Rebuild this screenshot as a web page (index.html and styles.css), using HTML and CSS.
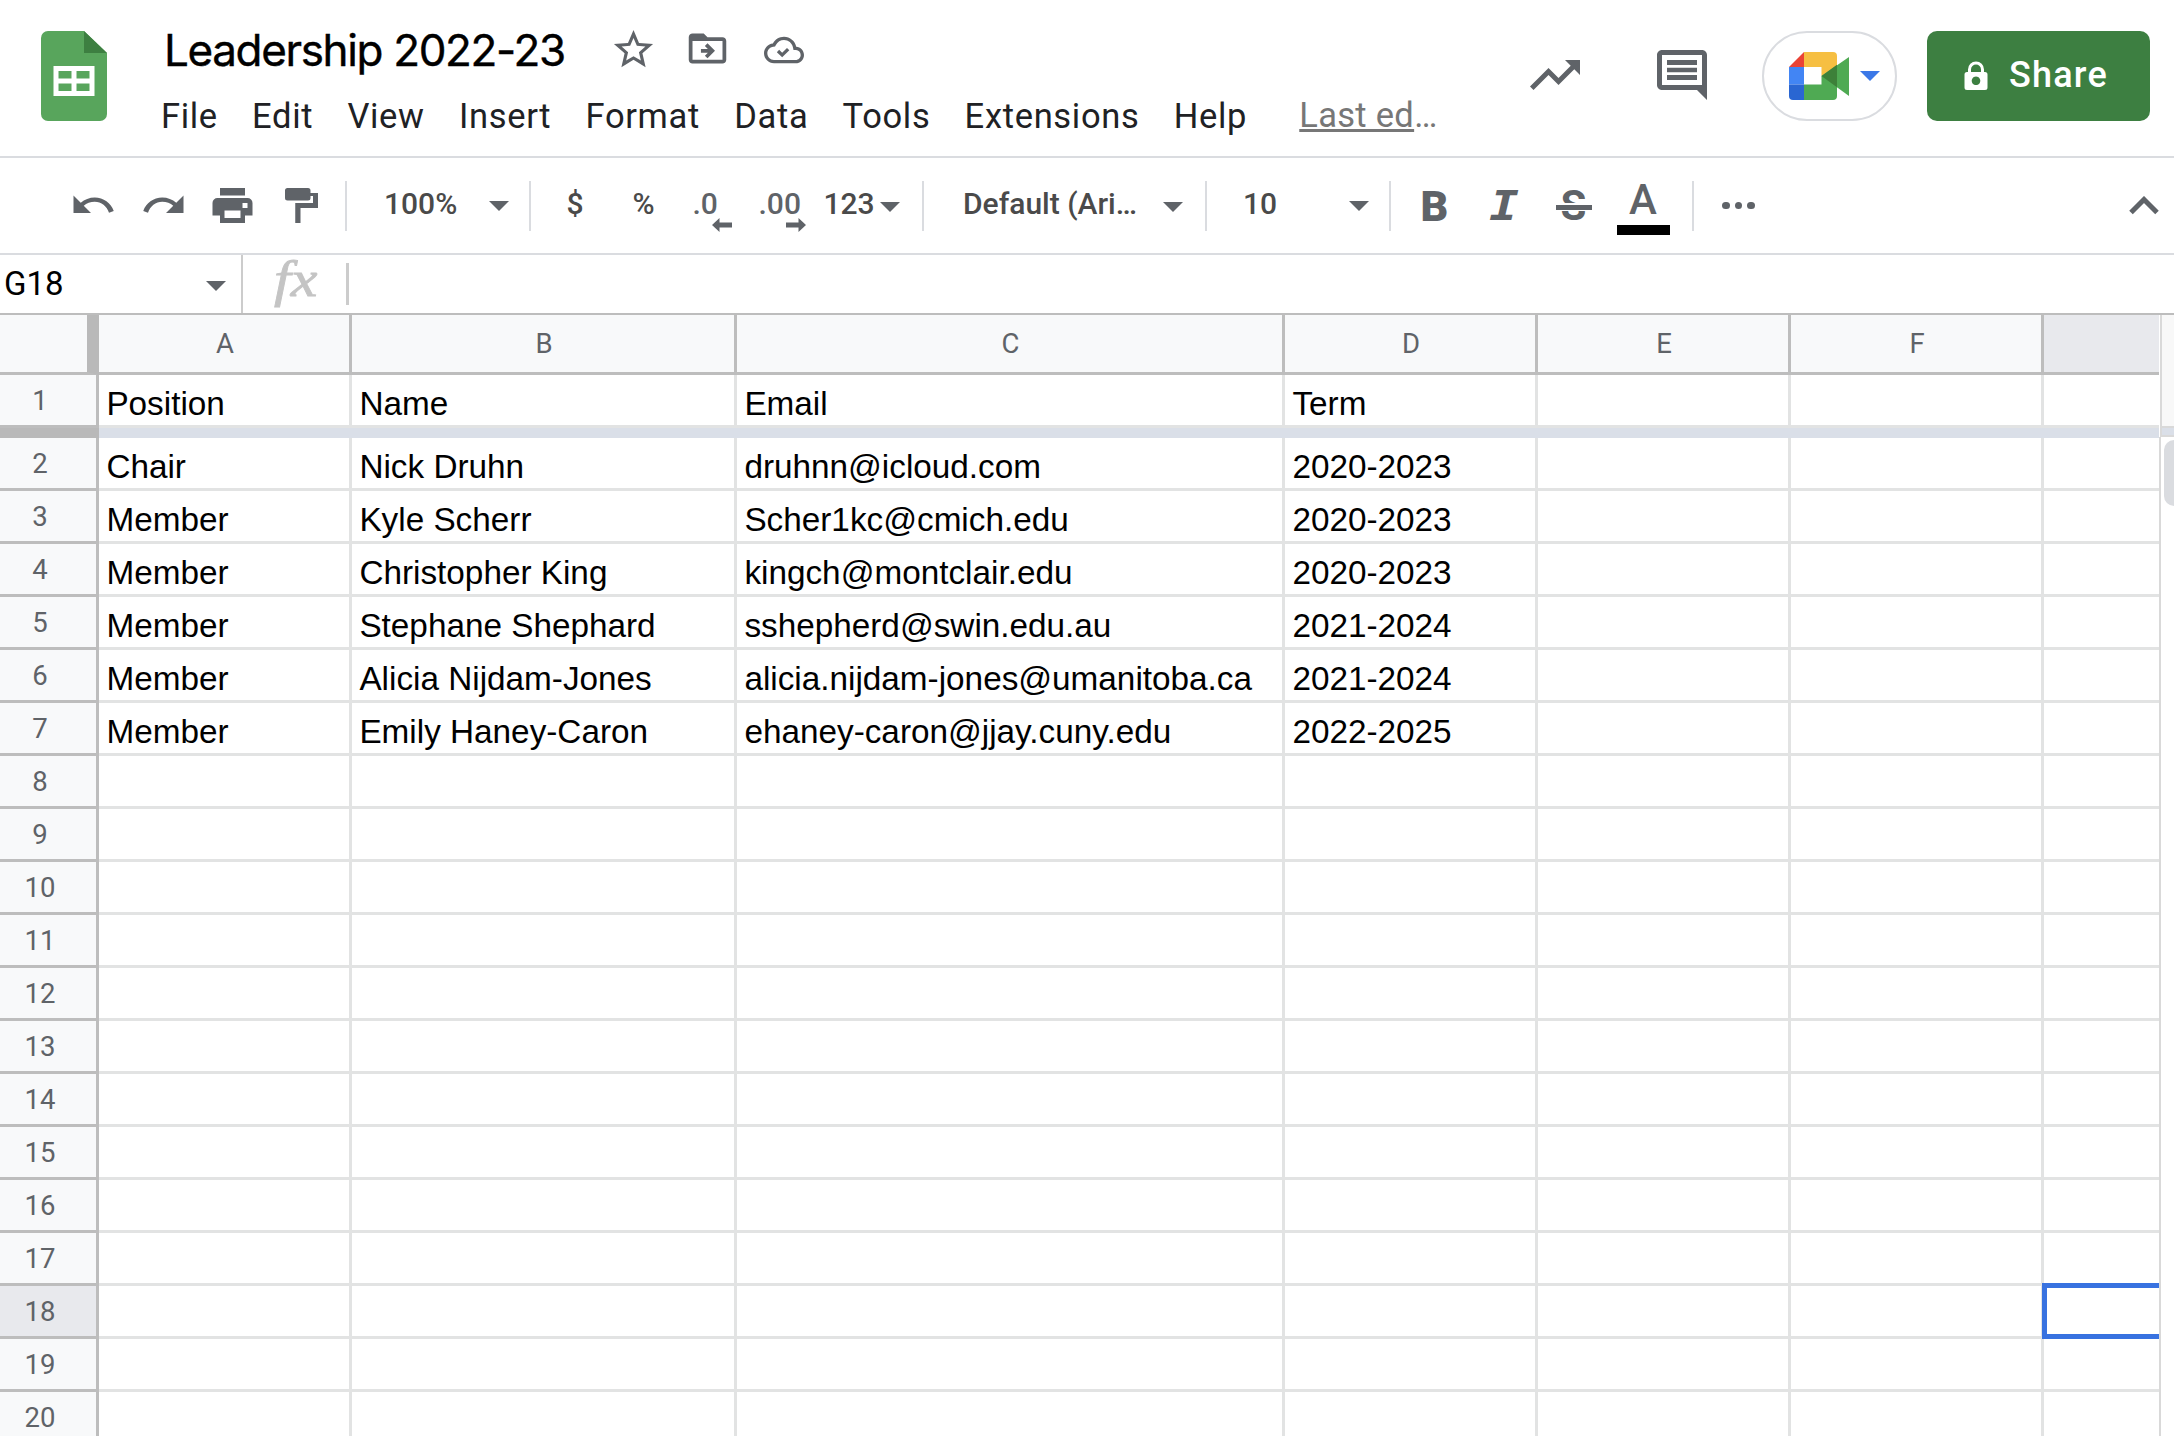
FILE: index.html
```html
<!DOCTYPE html>
<html lang="en">
<head>
<meta charset="utf-8">
<title>Leadership 2022-23</title>
<link rel="stylesheet" href="styles.css">
</head>
<body>
<header class="header">
  <svg class="logo" viewBox="0 0 66 90"><path fill="#58a55c" d="M7 0h36l23 22v61a7 7 0 0 1-7 7H7a7 7 0 0 1-7-7V7a7 7 0 0 1 7-7z"/><path fill="#3d7f41" d="M43 0l23 22H43z"/><path fill="#fff" fill-rule="evenodd" d="M12.500 35h41v30h-41zM17.500 40v7.500h13V40zM35.500 40v7.500h13V40zM17.500 52.500V60h13v-7.500zM35.500 52.500V60h13v-7.500z"/></svg>
  <div class="heading">
    <div class="title-row">
      <h1 class="title">Leadership 2022-23</h1>
      <svg class="icon star" viewBox="0 0 24 24"><path d="M22 9.240l-7.190-.62L12 2 9.190 8.630 2 9.240l5.460 4.730L5.820 21 12 17.270 18.180 21l-1.630-7.030L22 9.240zM12 15.400l-3.760 2.270 1-4.280-3.320-2.880 4.380-.38L12 6.100l1.710 4.040 4.380.38-3.320 2.880 1 4.280L12 15.400z"/></svg>
      <svg class="icon folder" viewBox="0 0 24 24"><path d="M20 6h-8l-2-2H4c-1.100 0-2 .9-2 2v12c0 1.100.9 2 2 2h16c1.100 0 2-.9 2-2V8c0-1.100-.9-2-2-2zm0 12H4V8h16v10zM8.500 12.200h3.700l-1.600-1.600L12 9.200l4 4-4 4-1.400-1.400 1.600-1.600H8.500z"/></svg>
      <svg class="icon cloud" viewBox="0 0 24 24"><path d="M19.350 10.040C18.670 6.590 15.640 4 12 4 9.110 4 6.600 5.640 5.350 8.040 2.340 8.360 0 10.910 0 14c0 3.310 2.690 6 6 6h13c2.760 0 5-2.240 5-5 0-2.640-2.050-4.780-4.650-4.960zM19 18H6c-2.210 0-4-1.790-4-4 0-2.050 1.530-3.760 3.560-3.970l1.070-.11.5-.95C8.080 7.140 9.940 6 12 6c2.620 0 4.880 1.860 5.390 4.430l.3 1.500 1.530.11c1.560.1 2.780 1.410 2.780 2.960 0 1.650-1.350 3-3 3zM10.900 16.400l-3.200-3.100 1.400-1.400 1.800 1.800 2.900-2.900 1.400 1.400z"/></svg>
    </div>
    <nav class="menu">
      <span>File</span><span>Edit</span><span>View</span><span>Insert</span><span>Format</span><span>Data</span><span>Tools</span><span>Extensions</span><span>Help</span>
      <span class="last-edit"><u>Last ed</u>…</span>
    </nav>
  </div>
  <div class="actions">
    <svg class="icon trend" viewBox="0 0 24 24"><path d="M16 6l2.290 2.290-4.880 4.880-4-4L2 16.590 3.410 18l6-6 4 4 6.300-6.290L22 12V6z"/></svg>
    <svg class="icon comment" viewBox="0 0 24 24"><path fill-rule="evenodd" d="M20 2H4c-1.100 0-2 .9-2 2v12c0 1.100.9 2 2 2h14l4 4V4c0-1.100-.9-2-2-2zM20 16H4V4h16zM6 6h12v2H6zM6 9.100h12v1.800H6zM6 12h12v2H6z"/></svg>
    <div class="meet">
      <svg class="meet-logo" viewBox="0 0 60 48"><path fill="#ea4335" d="M0 15L15 0v15z"/><path fill="#f6bf42" d="M15 0h29a4 4 0 0 1 4 4v10L32.500 24V15H15z"/><path fill="#4285f4" d="M0 15h15v17.500H0z"/><path fill="#2a66d2" d="M0 32.500h15V48H4a4 4 0 0 1-4-4z"/><path fill="#4faa53" d="M15 32.500h17.500V24L48 34v10a4 4 0 0 1-4 4H15zM60 5v39L32.500 24z"/><path fill="#3d8139" d="M48 12.700v22.600L32.500 24z"/></svg>
      <svg class="caret blue" viewBox="0 0 20 10"><path d="M0 0h20L10 10z"/></svg>
    </div>
    <div class="share">
      <svg class="lock" viewBox="0 0 24 30"><path fill="#fff" fill-rule="evenodd" d="M3 11h1V8.500a8 8 0 0 1 16 0V11h1a2.500 2.500 0 0 1 2.500 2.500v13A2.500 2.500 0 0 1 21 29H3a2.500 2.500 0 0 1-2.500-2.500v-13A2.500 2.500 0 0 1 3 11zm4 0h10V8.500a5 5 0 0 0-10 0zm5 4.500a4.300 4.300 0 1 0 .01 0z"/></svg>
      <span>Share</span>
    </div>
  </div>
</header>

<div class="toolbar">
  <div class="tools">
    <svg class="icon tool" viewBox="0 0 18 18"><path d="M1 5v7h7L5.100 9.100C6.200 8.100 7.800 7.500 9.500 7.500c2.600 0 4.900 1.800 5.700 4.400l1.900-.7c-1.100-3.200-4.100-5.400-7.600-5.400-2.100 0-4.100.8-5.600 2.100L1 5z"/></svg>
    <svg class="icon tool" viewBox="0 0 18 18"><path d="M17 5v7h-7l2.900-2.900C11.800 8.100 10.200 7.500 8.500 7.500c-2.600 0-4.900 1.800-5.700 4.400l-1.900-.7C2 8 5 5.800 8.500 5.800c2.100 0 4.100.8 5.600 2.100L17 5z"/></svg>
    <svg class="icon tool" viewBox="0 0 18 18"><path fill-rule="evenodd" d="M4 2h10v3H4zM3 6h12a2 2 0 0 1 2 2v5h-3v3H4v-3H1V8a2 2 0 0 1 2-2zM5.800 11v3h6.400v-3zM13 8v2h2V8z"/></svg>
    <svg class="icon tool" viewBox="0 0 18 18"><path d="M3 2h8.200a1 1 0 0 1 1 1v1h3v6H8.200v6H6.100V8h7.100V5.200h-1V6a1 1 0 0 1-1 1H3a1 1 0 0 1-1-1V3a1 1 0 0 1 1-1z"/></svg>
  </div>
  <div class="group zoom"><span>100%</span><svg class="caret" viewBox="0 0 20 10"><path d="M0 0h20L10 10z"/></svg></div>
  <div class="group formats">
    <span class="cur">$</span><span class="pct">%</span>
    <span class="dec d1">.0<svg viewBox="0 0 20 14"><path d="M0 7l7.500-7v4.500H20v5H7.500V14z"/></svg></span>
    <span class="dec d2">.00<svg viewBox="0 0 20 14"><path d="M20 7l-7.500-7v4.500H0v5h12.500V14z"/></svg></span>
    <span class="num123">123</span><svg class="caret low" viewBox="0 0 20 10"><path d="M0 0h20L10 10z"/></svg>
  </div>
  <div class="group font"><span>Default (Ari…</span><svg class="caret low" viewBox="0 0 20 10"><path d="M0 0h20L10 10z"/></svg></div>
  <div class="group size"><span>10</span><svg class="caret" viewBox="0 0 20 10"><path d="M0 0h20L10 10z"/></svg></div>
  <div class="group styles">
    <span class="glyph bold">B</span><span class="glyph italic">I</span><span class="glyph strike">S</span><span class="glyph color">A</span>
  </div>
  <div class="group more"><i></i><i></i><i></i></div>
  <svg class="chevron" viewBox="0 0 30 19"><path fill="none" stroke="#5f6368" stroke-width="5" d="M2 16.500L15 3.500l13 13"/></svg>
</div>

<div class="formula">
  <div class="namebox"><span>G18</span><svg class="caret" viewBox="0 0 20 10"><path d="M0 0h20L10 10z"/></svg></div>
  <div class="fx"><span>fx</span></div>
</div>

<main class="sheet">
  <table class="grid">
    <colgroup><col class="c-num"><col class="c-a"><col class="c-b"><col class="c-c"><col class="c-d"><col class="c-d"><col class="c-d"><col class="c-g"></colgroup>
    <thead><tr><th class="corner"></th><th>A</th><th>B</th><th>C</th><th>D</th><th>E</th><th>F</th><th class="active"></th></tr></thead>
    <tbody>
      <tr><th>1</th><td>Position</td><td>Name</td><td>Email</td><td>Term</td><td></td><td></td><td></td></tr>
      <tr class="freeze"><th></th><td colspan="7"></td></tr>
      <tr><th>2</th><td>Chair</td><td>Nick Druhn</td><td>druhnn@icloud.com</td><td>2020-2023</td><td></td><td></td><td></td></tr>
      <tr><th>3</th><td>Member</td><td>Kyle Scherr</td><td>Scher1kc@cmich.edu</td><td>2020-2023</td><td></td><td></td><td></td></tr>
      <tr><th>4</th><td>Member</td><td>Christopher King</td><td>kingch@montclair.edu</td><td>2020-2023</td><td></td><td></td><td></td></tr>
      <tr><th>5</th><td>Member</td><td>Stephane Shephard</td><td>sshepherd@swin.edu.au</td><td>2021-2024</td><td></td><td></td><td></td></tr>
      <tr><th>6</th><td>Member</td><td>Alicia Nijdam-Jones</td><td>alicia.nijdam-jones@umanitoba.ca</td><td>2021-2024</td><td></td><td></td><td></td></tr>
      <tr><th>7</th><td>Member</td><td>Emily Haney-Caron</td><td>ehaney-caron@jjay.cuny.edu</td><td>2022-2025</td><td></td><td></td><td></td></tr>
      <tr><th>8</th><td></td><td></td><td></td><td></td><td></td><td></td><td></td></tr>
      <tr><th>9</th><td></td><td></td><td></td><td></td><td></td><td></td><td></td></tr>
      <tr><th>10</th><td></td><td></td><td></td><td></td><td></td><td></td><td></td></tr>
      <tr><th>11</th><td></td><td></td><td></td><td></td><td></td><td></td><td></td></tr>
      <tr><th>12</th><td></td><td></td><td></td><td></td><td></td><td></td><td></td></tr>
      <tr><th>13</th><td></td><td></td><td></td><td></td><td></td><td></td><td></td></tr>
      <tr><th>14</th><td></td><td></td><td></td><td></td><td></td><td></td><td></td></tr>
      <tr><th>15</th><td></td><td></td><td></td><td></td><td></td><td></td><td></td></tr>
      <tr><th>16</th><td></td><td></td><td></td><td></td><td></td><td></td><td></td></tr>
      <tr><th>17</th><td></td><td></td><td></td><td></td><td></td><td></td><td></td></tr>
      <tr><th class="active">18</th><td></td><td></td><td></td><td></td><td></td><td></td><td class="selected"></td></tr>
      <tr><th>19</th><td></td><td></td><td></td><td></td><td></td><td></td><td></td></tr>
      <tr><th>20</th><td></td><td></td><td></td><td></td><td></td><td></td><td></td></tr>
    </tbody>
  </table>
  <div class="scroll">
    <div class="scroll-head"></div>
    <div class="scroll-band"></div>
    <div class="scroll-track"><div class="thumb"></div></div>
  </div>
</main>
</body>
</html>
```
FILE: styles.css
```css
*, *::before, *::after { box-sizing: border-box; }
body {
  margin: 0;
  height: 1436px;
  overflow: hidden;
  background: #fff;
  font-family: Roboto, "Liberation Sans", sans-serif;
  color: #202124;
}
svg { display: block; flex: none; }
.icon, .caret, .dec svg { fill: #5f6368; }

/* Header */
.header {
  display: flex;
  height: 158px;
  border-bottom: 2px solid #dadce0;
}
.logo { width: 66px; height: 90px; margin: 31px 0 0 41.200px; }
.heading { margin-left: 53.800px; }
.title-row { display: flex; align-items: center; height: 60px; margin-top: 20px; }
.title {
  width: 449px;
  margin: 0;
  padding-left: 3px;
  font: 400 44px/60px Inter, sans-serif;
  letter-spacing: -1.350px;
  color: #000;
  white-space: nowrap;
  -webkit-text-stroke: 0.400px #000;
}
.star { width: 47px; height: 47px; margin-top: -1px; }
.folder { width: 45px; height: 45px; margin: -4px 0 0 28px; }
.cloud { width: 40px; height: 40px; margin: -1px 0 0 34px; }
.menu {
  display: flex;
  gap: 34.200px;
  margin-top: 15px;
  font-size: 34.500px;
  line-height: 42px;
  letter-spacing: 0.680px;
  white-space: nowrap;
}
.last-edit { margin-left: 18px; margin-top: -1px; color: #777; letter-spacing: 0.300px; }
.last-edit u { text-decoration-thickness: 3px; text-underline-offset: 2px; text-decoration-skip-ink: none; }
.actions { display: flex; align-items: center; height: 90px; margin: 31px 24px 0 auto; }
.trend { width: 60px; height: 60px; margin: -2px 66px 0 0; }
.comment { width: 60px; height: 60px; margin: -2px 50px 0 1px; }
.meet {
  display: flex;
  align-items: center;
  width: 135px;
  height: 90px;
  margin-right: 30px;
  padding-left: 25px;
  border: 2px solid #dadce0;
  border-radius: 45px;
}
.meet-logo { width: 60px; height: 48px; margin-right: 11px; }
.caret { width: 20px; height: 10px; }
.caret.blue { fill: #3b78e7; }
.share {
  display: flex;
  align-items: center;
  width: 223px;
  height: 90px;
  padding-left: 37px;
  border-radius: 10px;
  background: #3d7f41;
  color: #fff;
  font: 500 36px/44px Roboto, sans-serif;
  letter-spacing: 1.200px;
}
.lock { width: 24px; height: 30px; margin-right: 21px; }
.share span { margin-top: -3px; }

/* Toolbar */
.toolbar {
  display: flex;
  align-items: center;
  height: 97px;
  border-bottom: 2px solid #dadce0;
  color: #4a4a4a;
  font-size: 30px;
  font-weight: 500;
  line-height: 36px;
}
.tools { display: flex; gap: 24.500px; width: 345px; padding-left: 71px; }
.tool { width: 45px; height: 45px; }
.group {
  display: flex;
  align-items: center;
  height: 50px;
  border-left: 2px solid #dadce0;
}
.group > span { margin-top: -3px; }
.group .caret.low { margin-top: 2px; }
.zoom { width: 184px; padding-left: 37px; }
.zoom span { width: 105px; }
.formats { width: 393px; padding-left: 35.500px; }
.cur { width: 66px; }
.pct { width: 60px; }
.dec { position: relative; color: #5f6368; }
.dec svg { position: absolute; top: 32px; width: 20px; height: 14px; }
.d1 { width: 66px; }
.d1 svg { left: 19px; }
.d2 { width: 65px; }
.d2 svg { left: 27px; }
.num123 { width: 56px; }
.font { width: 283px; padding-left: 39px; }
.font span { width: 200px; white-space: nowrap; }
.size { width: 184px; padding-left: 36px; }
.size span { width: 106px; }
.styles { width: 303px; padding-left: 13.500px; }
.glyph { color: #5f6368; }
.styles .glyph { display: flex; justify-content: center; align-items: center; width: 60px; height: 50px; margin: 0 9.500px 0 0; line-height: 50px; flex: none; }
.bold { font-size: 43px; font-weight: 900; }
.italic { font-family: "DejaVu Sans Mono", monospace; font-size: 41px; font-weight: 700; font-style: italic; transform: scaleX(1.200); }
.strike { position: relative; font-size: 42px; font-weight: 700; }
.strike::after {
  content: "";
  position: absolute;
  left: 12px;
  top: 22px;
  width: 36px;
  height: 8px;
  border: solid #fff;
  border-width: 2px 0 1px;
  background: #5f6368;
}
.styles .color { position: relative; font-size: 42px; font-weight: 500; line-height: 38px; align-items: flex-start; }
.color::after {
  content: "";
  position: absolute;
  left: 4px;
  top: 44px;
  width: 53px;
  height: 10px;
  background: #000;
}
.more { gap: 5px; padding-left: 28px; }
.more i { width: 7.500px; height: 7.500px; border-radius: 50%; background: #5f6368; }
.chevron { width: 30px; height: 19px; margin: 0 15px 0 auto; }

/* Formula bar */
.formula { display: flex; height: 60px; border-bottom: 2px solid #bdbdbd; }
.namebox {
  display: flex;
  align-items: center;
  width: 243px;
  padding-left: 4px;
  border-right: 2px solid #ccc;
  color: #000;
  font-size: 33px;
}
.namebox span { width: 202px; margin-top: -1px; }
.namebox .caret { margin-top: 4px; }
.fx {
  width: 106px;
  height: 42px;
  margin-top: 8px;
  padding-left: 31px;
  border-right: 3px solid #ccc;
  color: #c4c4c4;
  font: italic 50px/32px "Liberation Serif", serif;
}
.fx span { display: inline-block; transform: scaleX(1.200); transform-origin: 0 50%; -webkit-text-stroke: 0.800px #c4c4c4; }

/* Spreadsheet */
.sheet { display: flex; height: 1121px; overflow: hidden; }
.grid {
  flex: none;
  width: 2159px;
  table-layout: fixed;
  border-collapse: separate;
  border-spacing: 0;
}
.c-num { width: 99px; }
.c-a { width: 253px; }
.c-b { width: 385px; }
.c-c { width: 548px; }
.c-d { width: 253px; }
.c-g { width: 115px; }
.grid th {
  padding: 0;
  border: solid #bdbdbd;
  border-width: 0 3px 3px 0;
  background: #f8f9fa;
  color: #5f6368;
  font-size: 27.500px;
  font-weight: 400;
  line-height: 32px;
}
.grid thead th { height: 60px; padding-left: 2px; }
.grid .corner { border-right-width: 12px; border-right-color: #b9b9b9; }
.grid tbody th { height: 53px; padding: 1px 16px 0 0; }
.grid th.active { background: #e8e9ed; }
.grid td {
  padding: 0 0 3px 7.400px;
  border: solid #e2e3e3;
  border-width: 0 3px 3px 0;
  color: #000;
  font: 33.300px/37px "Liberation Sans", Arial, sans-serif;
  vertical-align: bottom;
  white-space: nowrap;
}
.grid th:last-child, .grid td:last-child { border-right: 0; }
.grid .freeze th, .grid .freeze td { height: 10px; padding: 0; border: 0; background: #dadfe8; line-height: 0; }
.grid .freeze th { background: #b9b9b9; }
.grid .selected { position: relative; }
.selected::after {
  content: "";
  position: absolute;
  left: -2px;
  top: -3px;
  right: 0;
  height: 56px;
  border: 5px solid #3872e0;
  border-right: 0;
}
.scroll { flex: 1; display: flex; flex-direction: column; }
.scroll-head { height: 113px; margin-left: 1px; border: solid #d9d9d9; border-width: 0 0 2px 2px; background: #f8f8f8; }
.scroll-band { height: 9px; margin-left: 1px; border: solid #d9d9d9; border-width: 0 0 2px 2px; background: #dadfe8; }
.scroll-track { flex: 1; border-left: 2px solid #d9d9d9; padding: 3px 0 0 3px; overflow: hidden; }
.thumb { width: 20px; height: 66px; border-radius: 10px; background: #dadce0; }
```
